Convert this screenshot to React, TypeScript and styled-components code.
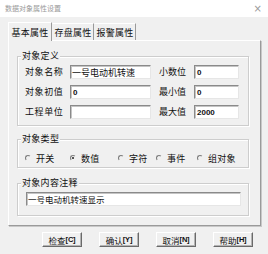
import { FC } from 'react'
import styled, { createGlobalStyle } from 'styled-components'

const GlobalStyle = createGlobalStyle`
  html, body {
    margin: 0;
    padding: 0;
    background: #f0f0f0;
  }
  * {
    box-sizing: border-box;
  }
`

const font = `"Noto Sans CJK SC", "Noto Sans", sans-serif`

type RadioItem = { label: string; width?: number; checked?: boolean }

const radios: RadioItem[] = [
  { label: '开关', width: 45 },
  { label: '数值', width: 48, checked: true },
  { label: '字符', width: 38 },
  { label: '事件', width: 41 },
  { label: '组对象' },
]

const buttons = [
  { text: '检查', key: 'C' },
  { text: '确认', key: 'Y' },
  { text: '取消', key: 'N' },
  { text: '帮助', key: 'H' },
]

const App: FC = () => {
  return (
    <>
      <GlobalStyle />
      <Window>
        <TitleBar>
          <Title>数据对象属性设置</Title>
          <Close>×</Close>
        </TitleBar>
        <Body>
          <TabStrip>
            <Tab $active>基本属性</Tab>
            <Tab>存盘属性</Tab>
            <Tab>报警属性</Tab>
          </TabStrip>
          <Panel>
            <Group $height={70} $top={15}>
              <Legend>对象定义</Legend>
              <FieldGrid>
                <Label>对象名称</Label>
                <TextInput>一号电动机转速</TextInput>
                <RightLabel>小数位</RightLabel>
                <NumInput>0</NumInput>

                <Label>对象初值</Label>
                <NumInput>0</NumInput>
                <RightLabel>最小值</RightLabel>
                <NumInput>0</NumInput>

                <Label>工程单位</Label>
                <TextInput />
                <RightLabel>最大值</RightLabel>
                <NumInput>2000</NumInput>
              </FieldGrid>
            </Group>

            <Group $height={29} $top={13}>
              <Legend>对象类型</Legend>
              <RadioRow>
                {radios.map((r) => (
                  <RadioOption key={r.label} $width={r.width}>
                    <RadioDot $checked={r.checked} />
                    {r.label}
                  </RadioOption>
                ))}
              </RadioRow>
            </Group>

            <Group $height={33} $top={15}>
              <Legend>对象内容注释</Legend>
              <CommentInput>一号电动机转速显示</CommentInput>
            </Group>
          </Panel>
          <ButtonRow>
            {buttons.map((b) => (
              <Button key={b.key}>
                {b.text}
                <Hotkey>[{b.key}]</Hotkey>
              </Button>
            ))}
          </ButtonRow>
        </Body>
      </Window>
    </>
  )
}

const Window = styled.div`
  width: 268px;
  height: 254px;
  background: #f0f0f0;
  font-family: ${font};
  color: #111;
  overflow: hidden;
`

const TitleBar = styled.div`
  height: 17px;
  background: #ffffff;
  display: flex;
  align-items: center;
  justify-content: space-between;
  padding: 0 6px 0 5px;
`

const Title = styled.span`
  font-size: 7px;
  color: #9a9a9a;
  line-height: 1;
`

const Close = styled.span`
  font-size: 10px;
  color: #9a9a9a;
  line-height: 1;
  font-family: "DejaVu Sans", sans-serif;
`

const Body = styled.div`
  padding: 4px 7px 0 8px;
`

const TabStrip = styled.div`
  display: flex;
  height: 19px;
  align-items: flex-end;
`

const Tab = styled.div<{ $active?: boolean }>`
  width: ${(p) => (p.$active ? 44 : 42)}px;
  height: ${(p) => (p.$active ? 19 : 17)}px;
  display: flex;
  align-items: center;
  justify-content: center;
  font-size: 9px;
  letter-spacing: 0.3px;
  background: #f0f0f0;
  border-top: 1px solid #ffffff;
  border-left: 1px solid ${(p) => (p.$active ? '#ffffff' : 'transparent')};
  border-right: 1px solid #9a9a9a;
  margin-bottom: ${(p) => (p.$active ? -1 : 0)}px;
  position: relative;
  z-index: ${(p) => (p.$active ? 1 : 0)};
`

const Panel = styled.div`
  width: 253px;
  height: 186px;
  border: 1px solid;
  border-color: #ffffff #9a9a9a #9a9a9a #ffffff;
  box-shadow: 1px 1px 0 #c8c8c8;
  padding: 0 11px 0 8px;
  display: flex;
  flex-direction: column;
`

const Group = styled.div<{ $height: number; $top: number }>`
  position: relative;
  height: ${(p) => p.$height}px;
  margin-top: ${(p) => p.$top}px;
  border: 1px solid #cdcdcd;
  box-shadow: inset 1px 1px 0 #ffffff, 1px 1px 0 #ffffff;
  padding: 8px 8px 0 7px;
`

const Legend = styled.span`
  position: absolute;
  top: -7px;
  left: 3px;
  padding: 0 1px;
  background: #f0f0f0;
  font-size: 9px;
  line-height: 12px;
  letter-spacing: 0.3px;
`

const FieldGrid = styled.div`
  display: grid;
  grid-template-columns: 45px 81px 43px 45px;
  grid-auto-rows: 14px;
  row-gap: 6px;
  align-items: center;
`

const Label = styled.span`
  font-size: 9px;
  letter-spacing: 0.6px;
  line-height: 14px;
`

const RightLabel = styled(Label)`
  text-align: right;
  padding-right: 8px;
  letter-spacing: 0;
`

const Field = styled.div`
  height: 14px;
  background: #ffffff;
  border: 1px solid;
  border-color: #8a8a8a #e6e6e6 #e6e6e6 #8a8a8a;
  box-shadow: inset 1px 1px 0 #c4c4c4;
  display: flex;
  align-items: center;
  padding-left: 1px;
  overflow: hidden;
  white-space: nowrap;
`

const TextInput = styled(Field)`
  font-size: 9px;
`

const NumInput = styled(Field)`
  font-family: "Liberation Sans", Arial, sans-serif;
  font-weight: bold;
  font-size: 8px;
  padding-left: 2px;
`

const CommentInput = styled(TextInput)`
  width: 215px;
  margin-left: 1px;
  font-size: 8.5px;
`

const RadioRow = styled.div`
  display: flex;
  align-items: center;
  height: 14px;
  margin-top: 3px;
`

const RadioOption = styled.label<{ $width?: number }>`
  display: flex;
  align-items: center;
  gap: 3px;
  font-size: 9px;
  letter-spacing: 0.3px;
  width: ${(p) => (p.$width ? `${p.$width}px` : 'auto')};
  flex: none;
`

const RadioDot = styled.span<{ $checked?: boolean }>`
  position: relative;
  width: 6px;
  height: 6px;
  border-radius: 50%;
  border: 1px solid;
  border-color: #7a7a7a #f0f0f0 #f0f0f0 #7a7a7a;
  margin-right: 2px;
  background: #f0f0f0;

  &::after {
    content: '';
    display: ${(p) => (p.$checked ? 'block' : 'none')};
    position: absolute;
    left: 1px;
    top: 1px;
    width: 2px;
    height: 2px;
    border-radius: 50%;
    background: #222;
  }
`

const ButtonRow = styled.div`
  display: flex;
  gap: 17px;
  padding-left: 34px;
  margin-top: 6px;
`

const Button = styled.div`
  width: 40px;
  height: 15px;
  display: flex;
  align-items: center;
  justify-content: center;
  font-size: 8.5px;
  background: #f0f0f0;
  border: 1px solid;
  border-color: #ffffff #6a6a6a #6a6a6a #ffffff;
  box-shadow: inset -1px -1px 0 #b4b4b4;
`

const Hotkey = styled.span`
  font-family: "Liberation Sans", Arial, sans-serif;
  font-weight: bold;
  font-size: 7.5px;
  letter-spacing: -0.2px;
`

export default App
